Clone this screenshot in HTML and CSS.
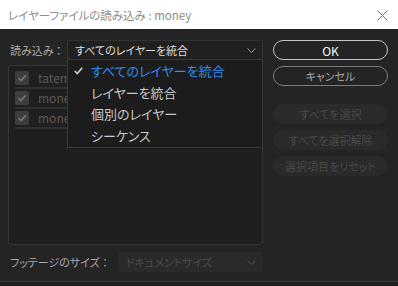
FILE: index.html
```html
<!DOCTYPE html>
<html lang="ja">
<head>
<meta charset="utf-8">
<link rel="stylesheet" href="styles.css">
</head>
<body>
<div class="titlebar">
  <span class="title">レイヤーファイルの読み込み : money</span>
  <svg class="close" width="11" height="11" viewBox="0 0 11 11"><path d="M0.5 0.5 L10.5 10.5 M10.5 0.5 L0.5 10.5" stroke="#707070" stroke-width="1" fill="none"/></svg>
</div>
<div class="dialog">
  <div class="left">
    <div class="field">
      <span class="label">読み込み ：</span>
      <div class="select">
        <span>すべてのレイヤーを統合</span>
        <svg class="chev" width="9" height="5" viewBox="0 0 9 5"><path d="M0.5 0.5 L4.5 4.5 L8.5 0.5" stroke="#9a9a9a" stroke-width="1" fill="none"/></svg>
      </div>
    </div>
    <div class="panel">
      <div class="item"><span class="cb"><svg width="14" height="14" viewBox="0 0 14 14"><path d="M3.5 7.2 L6 9.6 L10.6 4.4" stroke="#747474" stroke-width="1.6" fill="none"/></svg></span><span class="name">tatemono</span></div>
      <div class="item"><span class="cb"><svg width="14" height="14" viewBox="0 0 14 14"><path d="M3.5 7.2 L6 9.6 L10.6 4.4" stroke="#747474" stroke-width="1.6" fill="none"/></svg></span><span class="name">money</span></div>
      <div class="item"><span class="cb"><svg width="14" height="14" viewBox="0 0 14 14"><path d="M3.5 7.2 L6 9.6 L10.6 4.4" stroke="#747474" stroke-width="1.6" fill="none"/></svg></span><span class="name">money</span></div>
    </div>
    <div class="field footage">
      <span class="label wide">フッテージのサイズ ：</span>
      <div class="select disabled">
        <span>ドキュメントサイズ</span>
        <svg class="chev" width="9" height="5" viewBox="0 0 9 5"><path d="M0.5 0.5 L4.5 4.5 L8.5 0.5" stroke="#4a4a4a" stroke-width="1" fill="none"/></svg>
      </div>
    </div>
  </div>
  <div class="right">
    <div class="btn primary">OK</div>
    <div class="btn secondary">キャンセル</div>
    <div class="btn off first">すべてを選択</div>
    <div class="btn off">すべてを選択解除</div>
    <div class="btn off">選択項目をリセット</div>
  </div>
  <div class="menu">
    <div class="opt active"><svg class="tick" width="9" height="8" viewBox="0 0 9 8"><path d="M0.8 4 L3.3 6.5 L8.2 0.8" stroke="#cfcfcf" stroke-width="1.6" fill="none"/></svg><span>すべてのレイヤーを統合</span></div>
    <div class="opt"><span>レイヤーを統合</span></div>
    <div class="opt"><span>個別のレイヤー</span></div>
    <div class="opt"><span>シーケンス</span></div>
  </div>
</div>
<div class="under"></div>
</body>
</html>
```

FILE: styles.css
```css
html, body {
  margin: 0;
  padding: 0;
}
body {
  width: 398px;
  height: 286px;
  overflow: hidden;
  background: #1f1f1f;
  font-family: "Noto Sans CJK JP", "Noto Sans", sans-serif;
  font-feature-settings: "palt";
}
.titlebar {
  height: 29px;
  background: #ffffff;
  display: flex;
  align-items: center;
  justify-content: space-between;
  padding: 0 10px 0 8px;
  box-sizing: border-box;
}
.title {
  font-size: 11.5px;
  color: #8c8c8c;
}
.close {
  display: block;
  margin-top: 1px;
}
.dialog {
  position: relative;
  height: 252px;
  background: #242424;
  display: flex;
  gap: 10px;
  padding: 11px 0 0 8px;
  box-sizing: border-box;
}
.left {
  width: 255px;
  display: flex;
  flex-direction: column;
}
.field {
  display: flex;
  align-items: center;
  height: 20px;
}
.label {
  width: 59px;
  padding-left: 2px;
  box-sizing: border-box;
  font-size: 11px;
  color: #a8a8a8;
}
.label.wide {
  width: 110px;
}
.select {
  flex: 1;
  height: 20px;
  box-sizing: border-box;
  border: 1px solid #333333;
  border-radius: 3px;
  background: #202020;
  display: flex;
  align-items: center;
  justify-content: space-between;
  padding: 0 6px 0 7px;
  font-size: 11px;
  color: #dcdcdc;
}
.select.disabled {
  border-color: #2a2a2a;
  background: #2a2a2a;
  color: #4a4a4a;
}
.chev {
  display: block;
}
.panel {
  margin-top: 5px;
  height: 180px;
  box-sizing: border-box;
  border: 1px solid #363636;
  border-radius: 3px;
  background: #1f1f1f;
  padding: 3px 0 0 6px;
}
.item {
  display: flex;
  align-items: center;
  gap: 9px;
  height: 20px;
  box-sizing: border-box;
  border-bottom: 2px solid #303030;
  padding-bottom: 1px;
}
.cb {
  width: 14px;
  height: 14px;
  border-radius: 2px;
  background: #3e3e3e;
  display: block;
}
.cb svg {
  display: block;
}
.name {
  font-size: 12px;
  color: #5a5a5a;
}
.footage {
  margin-top: 7px;
}
.right {
  width: 115px;
  display: flex;
  flex-direction: column;
  gap: 6px;
}
.btn {
  height: 20px;
  box-sizing: border-box;
  border-radius: 10px;
  display: flex;
  align-items: center;
  justify-content: center;
  font-size: 11px;
}
.btn.primary {
  border: 1px solid #c4c4c4;
  color: #f4f4f4;
  font-size: 12px;
}
.btn.secondary {
  border: 1px solid #7c7c7c;
  color: #a6a6a6;
}
.btn.off {
  background: #2a2a2a;
  color: #484848;
}
.btn.off.first {
  margin-top: 12px;
}
.menu {
  position: absolute;
  left: 67px;
  top: 30px;
  width: 196px;
  height: 89px;
  box-sizing: border-box;
  background: #1c1c1c;
  border: 1px solid #383838;
}
.opt {
  height: 21.5px;
  display: flex;
  align-items: center;
  padding-left: 23px;
  position: relative;
  font-size: 13px;
  color: #c8c8c8;
}
.opt.active {
  color: #2d8ceb;
}
.tick {
  position: absolute;
  left: 6px;
  top: 7px;
}
.under {
  height: 5px;
  box-sizing: border-box;
  border-top: 1px solid #3a3a3a;
  background: #1e1e1e;
}
```
